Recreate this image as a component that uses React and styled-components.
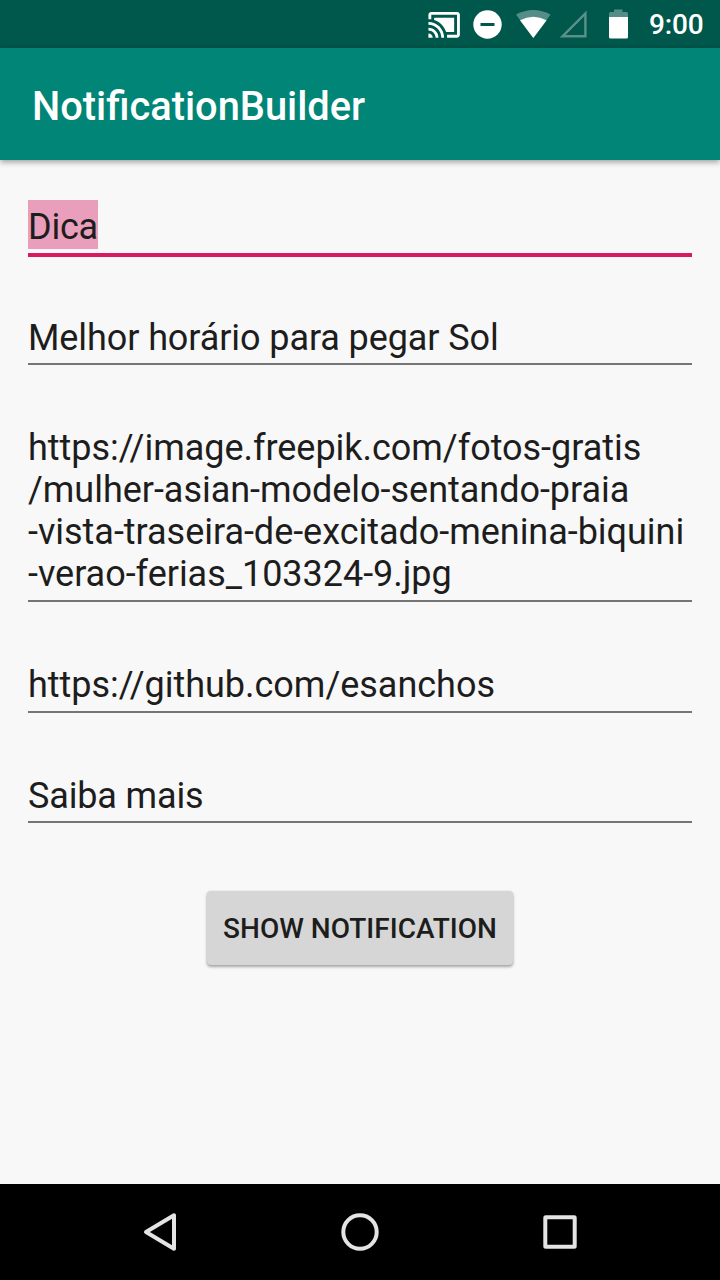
import React from "react";
import styled, { createGlobalStyle } from "styled-components";

const GlobalStyle = createGlobalStyle`
  body {
    margin: 0;
    background: #f8f8f8;
    font-family: Roboto, "Liberation Sans", sans-serif;
  }
`;

const Screen = styled.div`
  width: 720px;
  height: 1280px;
  display: flex;
  flex-direction: column;
  overflow: hidden;
  background: #f8f8f8;
  color: #1d1d1d;
`;

const StatusBar = styled.header`
  flex: none;
  height: 48px;
  display: flex;
  align-items: center;
  padding-left: 427px;
  background: #00574b;
`;

const StatusIcon = styled.svg`
  flex: none;
  display: block;
  height: 48px;
  width: ${(p) => p.$width}px;
  margin-right: ${(p) => p.$gap}px;
`;

const Clock = styled.span`
  padding-top: 2px;
  color: #fff;
  font-size: 28px;
  font-weight: 500;
  line-height: 48px;
  letter-spacing: -0.15px;
  white-space: nowrap;
`;

const AppBar = styled.div`
  flex: none;
  height: 112px;
  box-sizing: border-box;
  display: flex;
  align-items: center;
  padding: 5px 32px 0;
  background: #008577;
  box-shadow: 0 2px 6px rgba(0, 0, 0, 0.38);
`;

const Title = styled.h1`
  margin: 0;
  color: #fff;
  font-size: 39.8px;
  font-weight: 500;
  line-height: 48px;
`;

const Form = styled.main`
  flex: 1;
  display: flex;
  flex-direction: column;
  padding: 46px 28px 0;
`;

const Field = styled.div`
  flex: none;
  padding-bottom: ${(p) => p.$inset ?? 5}px;
  margin-bottom: ${(p) => p.$gap ?? 61.5}px;
  border-bottom: ${(p) => (p.$focused ? "4px solid #d81b60" : "2px solid #757575")};
  font-size: 36px;
  line-height: 42px;
  letter-spacing: ${(p) => p.$tracking || 0}px;
  white-space: pre;
`;

const Selection = styled.span`
  padding: 6px 0 1px;
  background: #e99fbc;
`;

const Button = styled.button`
  align-self: center;
  width: 306px;
  height: 74px;
  margin: 6px 0 0;
  padding: 1px 0 0;
  border: 0;
  border-radius: 4px;
  background: #d6d6d6;
  box-shadow: 0 2px 3px rgba(0, 0, 0, 0.32), 0 0 2px rgba(0, 0, 0, 0.12);
  color: #1d1d1d;
  font: 500 28px/74px Roboto, "Liberation Sans", sans-serif;
  text-transform: uppercase;
  white-space: nowrap;
`;

const NavBar = styled.nav`
  flex: none;
  height: 96px;
  display: flex;
  justify-content: center;
  align-items: center;
  gap: 152px;
  background: #000;
`;

const NavIcon = styled.svg`
  display: block;
  width: 48px;
  height: 48px;
  fill: none;
  stroke: #e4e4e4;
  stroke-width: 4;
  stroke-linejoin: round;
`;

const imageUrlLines = [
  "https://image.freepik.com/fotos-gratis",
  "/mulher-asian-modelo-sentando-praia",
  "-vista-traseira-de-excitado-menina-biquini",
  "-verao-ferias_103324-9.jpg",
];

export default function App() {
  return (
    <Screen>
      <GlobalStyle />
      <StatusBar>
        <StatusIcon $width={34} $gap={12} viewBox="0 0 34 48">
          <path
            transform="translate(0 7.7) scale(1.43)"
            fill="#fff"
            d="M1 18v3h3c0-1.66-1.34-3-3-3zm0-4v2c2.76 0 5 2.24 5 5h2c0-3.87-3.13-7-7-7zm18-7H5v1.63c3.96 1.28 7.09 4.41 8.37 8.37H19V7zM1 10v2c4.97 0 9 4.03 9 9h2c0-6.08-4.93-11-11-11zm20-7H3c-1.1 0-2 .9-2 2v3h2V5h18v14h-7v2h7c1.1 0 2-.9 2-2V5c0-1.1-.9-2-2-2z"
          />
        </StatusIcon>
        <StatusIcon $width={29} $gap={14} viewBox="0 0 29 48">
          <circle cx="14.5" cy="24.5" r="14.2" fill="#fff" />
          <rect x="7.5" y="23" width="14" height="3" fill="#00574b" />
        </StatusIcon>
        <StatusIcon $width={35} $gap={8} viewBox="0 0 35 48">
          <path d="M0 14.5Q17.3 5.5 34.6 14.5L17.3 38Z" fill="#fff" fillOpacity="0.33" />
          <path d="M4 20.3Q17.3 13.3 30.6 20.3L17.3 38Z" fill="#fff" />
        </StatusIcon>
        <StatusIcon $width={29} $gap={20} viewBox="0 0 29 48">
          <path
            d="M3.5 36.3H26.4V13.3Z"
            fill="none"
            stroke="#fff"
            strokeOpacity="0.35"
            strokeWidth="2.4"
          />
        </StatusIcon>
        <StatusIcon $width={21} $gap={20} viewBox="0 0 21 48">
          <path d="M1 17V13.5Q1 12 2.5 12H6V9.5H14.5V12H18.5Q20 12 20 13.5V17Z" fill="#fff" fillOpacity="0.33" />
          <path d="M1 17H20V37Q20 38.5 18.5 38.5H2.5Q1 38.5 1 37Z" fill="#fff" />
        </StatusIcon>
        <Clock>9:00</Clock>
      </StatusBar>
      <AppBar>
        <Title>NotificationBuilder</Title>
      </AppBar>
      <Form>
        <Field $focused $gap={60} $tracking={-0.2}>
          <Selection>Dica</Selection>
        </Field>
        <Field $inset={4} $gap={62} $tracking={-0.09}>Melhor horário para pegar Sol</Field>
        <Field $tracking={-0.03}>{imageUrlLines.join("\n")}</Field>
        <Field $gap={62.5} $tracking={-0.02}>https://github.com/esanchos</Field>
        <Field $inset={4} $tracking={-0.15}>Saiba mais</Field>
        <Button type="button">Show notification</Button>
      </Form>
      <NavBar>
        <NavIcon viewBox="0 0 48 48">
          <path d="M10 24L38 7.3V40.7Z" />
        </NavIcon>
        <NavIcon viewBox="0 0 48 48">
          <circle cx="24" cy="24" r="16.7" />
        </NavIcon>
        <NavIcon viewBox="0 0 48 48">
          <rect x="9.3" y="9.3" width="29.4" height="29.4" rx="0.5" />
        </NavIcon>
      </NavBar>
    </Screen>
  );
}
